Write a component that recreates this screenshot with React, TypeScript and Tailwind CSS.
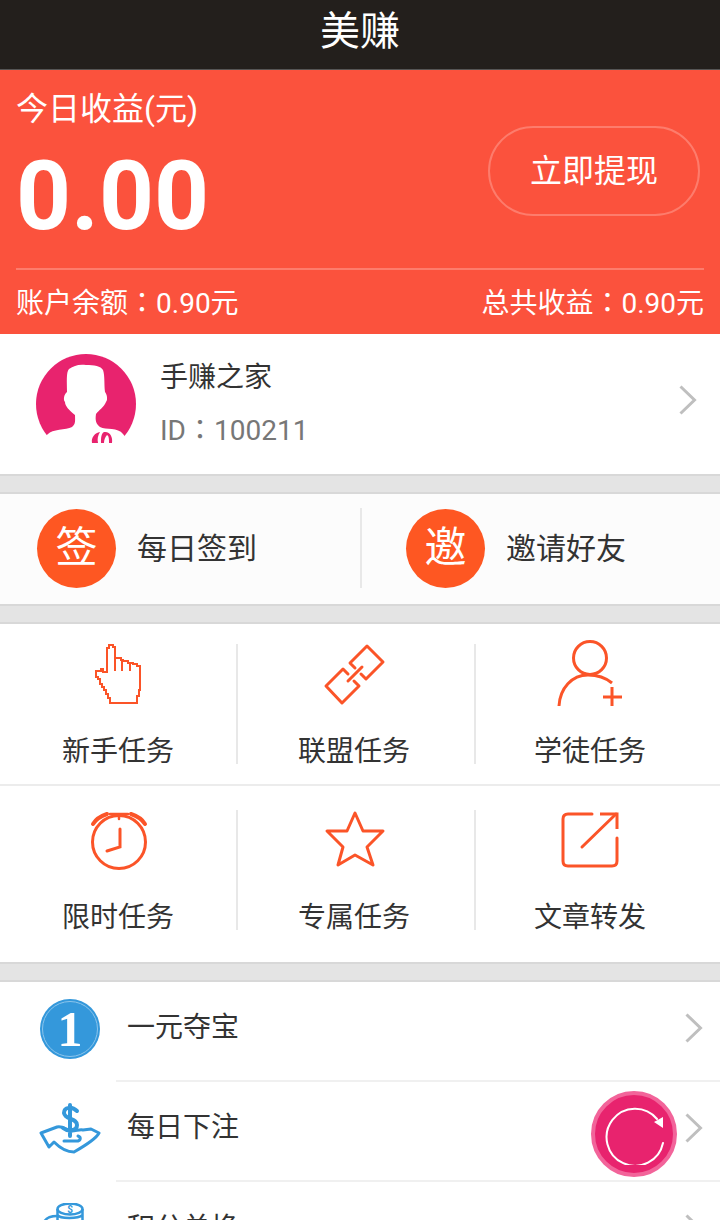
const CJK = "font-['Roboto','Noto_Sans_CJK_SC',sans-serif]"

const orange = '#fb5428'

// the fullwidth colon sits in the middle of its box only in the TC cut
const Colon = () => <span className="font-['Noto_Sans_CJK_TC',sans-serif]">：</span>

const HandIcon = () => (
  <svg width="60" height="70" viewBox="88 640 60 70" fill="none" stroke={orange} strokeWidth="2" shapeRendering="crispEdges">
    <path d="M107 672V648H109V645H113V647H115V658H121V660H123V661H128V663H133V664H137V666H140V690H139V696H137V703H110V698H108V694H106V690H104V687H102V684H100V679H98V677H96V671H101V669H103V672Z" />
    <path d="M115 658V671M122 660V671M130 662V671" />
  </svg>
)

const LinkIcon = () => (
  <svg width="64" height="70" viewBox="322 640 64 70" fill="none" stroke={orange} strokeWidth="3" strokeLinecap="round" strokeLinejoin="round">
    <path d="M355 668L350 663L367 646L383 662L366 679L361 674" />
    <path d="M348 674L343 669L326 686L342 703L359 686L354 681" />
    <path d="M348 681L362 667" />
  </svg>
)

const UserPlusIcon = () => (
  <svg width="70" height="70" viewBox="555 640 70 70" fill="none" stroke={orange} strokeWidth="3">
    <circle cx="590" cy="658" r="16.5" />
    <path d="M559 706C560 688 572 675 588 675C598 675 606 678 612 683" />
    <path d="M603 697H622M612 687V706" />
  </svg>
)

const ClockIcon = () => (
  <svg width="60" height="70" viewBox="88 806 60 70" fill="none" stroke={orange} strokeWidth="3" strokeLinecap="round">
    <circle cx="119" cy="842" r="26.5" />
    <path d="M120 829V847L107 851" />
    <path d="M110 814H128M119 814V819" strokeWidth="2.5" />
    <path d="M93 824C96 819 101 816 107 814M131 814C137 816 142 819 145 824" strokeWidth="4" />
  </svg>
)

const StarIcon = () => (
  <svg width="64" height="70" viewBox="322 806 64 70" fill="none" stroke={orange} strokeWidth="3" strokeLinejoin="round">
    <path d="M355 813L363 831H383L367 847L373 865L355 855L338 865L343 847L327 831H347Z" />
  </svg>
)

const ShareIcon = () => (
  <svg width="64" height="70" viewBox="558 806 64 70" fill="none" stroke={orange} strokeWidth="3" strokeLinecap="round">
    <path d="M592 814H568Q563 814 563 819V861Q563 866 568 866H612Q617 866 617 861V838" />
    <path d="M582 847L616 814" />
    <path d="M600 814H617V829" strokeLinecap="butt" />
  </svg>
)

const Avatar = () => (
  <svg width="100" height="96" viewBox="0 0 100 96" className="block">
    <circle cx="50" cy="50" r="50" fill="#e8236e" />
    <path
      d="M0 96V90L12 80C16 75 30 76 36 73C40 70 39 66 39 61C33 56 29 52 29 48C27 46 28 40 31 38C31 28 30 18 33 15C38 12 42 10 50 11C58 11 65 12 67 16C69 22 68 30 69 38C71 40 72 46 70 48C68 53 63 56 60 60C59 66 60 70 64 73C70 76 82 73 87 80L100 96Z"
      fill="#fff"
    />
    <path d="M56 89C55 83 59 79 64 78C62 81 61 85 62 89ZM65 89C65 84 65 80 68 78C74 77 77 83 76 89H73C73 85 73 82 71 81C69 83 68 86 68 89Z" fill="#e8236e" />
  </svg>
)

const HandCoinIcon = () => (
  <svg width="62" height="54" viewBox="39 1102 62 54" fill="none" stroke="#3498db" strokeWidth="3" strokeLinejoin="round" strokeLinecap="round">
    <path d="M41 1133L57 1127C62 1125 68 1131 72 1131C76 1131 80 1129 83 1130L91 1129L99 1133C97 1137 88 1144 74 1152C66 1152 58 1146 54 1142L49 1147Z" />
    <path d="M64 1141H78C81 1140 81 1137 78 1136" />
    <path d="M77 1111C72 1106 64 1107 64 1113C65 1120 77 1118 77 1125C77 1131 68 1132 63 1128M70 1105V1136" strokeWidth="4" />
  </svg>
)

const CoinsIcon = () => (
  <svg width="58" height="18" viewBox="41 1203 58 18" fill="none" stroke="#3498db" strokeWidth="2.5" className="block">
    <ellipse cx="70" cy="1209" rx="12.5" ry="5.5" />
    <path d="M57.5 1209V1222M82.5 1209V1222M57.5 1215C60 1219 78 1219 82.5 1215" />
    <path d="M44 1222C46 1218 50 1216 57 1216" />
    <text x="70" y="1212.5" fontSize="10" fontWeight="700" textAnchor="middle" fill="#3498db" stroke="none">$</text>
  </svg>
)

const Chevron = () => (
  <svg width="18" height="30" viewBox="0 0 18 30" fill="none" stroke="#bfbfbf" strokeWidth="3">
    <path d="M1.5 1.5L15.5 15L1.5 28.5" />
  </svg>
)

const GridCell = ({ icon, label, divider }: { icon: React.ReactNode; label: string; divider?: string }) => (
  <div className="relative flex flex-col items-center w-[236px]">
    <div className="h-[70px] flex items-start justify-center">{icon}</div>
    <span className="text-[28px] leading-[40px] mt-[22px] text-[#333]">{label}</span>
    {divider && <div className={`absolute top-[4px] h-[120px] w-[2px] bg-[#e8e8e8] ${divider}`} />}
  </div>
)

const ListRow = ({ icon, label, divider = true }: { icon: React.ReactNode; label: string; divider?: boolean }) => (
  <div className="flex h-[100px]">
    <div className="w-[116px] flex items-center justify-center pl-[24px] pb-[6px] shrink-0">{icon}</div>
    <div className={`flex-1 flex items-center justify-between pl-[11px] pr-[17px] pb-[6px] ${divider ? 'border-b-2 border-[#f0f0f0]' : ''}`}>
      <span className="text-[28px] text-[#333]">{label}</span>
      <Chevron />
    </div>
  </div>
)

export default function App() {
  return (
    <div className={`relative h-[1220px] w-[720px] overflow-hidden bg-[#e4e4e4] ${CJK}`}>
      <header className="h-[70px] bg-[#231f1c] border-b border-[#555] flex items-center justify-center text-white text-[40px] pb-[5px]">
        美赚
      </header>

      <section className="h-[264px] bg-[#fb523d] text-white px-4 flex flex-col">
        <div className="flex-1 flex items-start justify-between">
          <div>
            <div className="text-[32px] leading-[40px] pt-[19px]">今日收益(元)</div>
            <div className="text-[96px] leading-[96px] font-bold mt-[19px]">0.00</div>
          </div>
          <button className="mt-[56px] mr-[4px] w-[212px] h-[90px] rounded-[45px] border-2 border-[#fd7c6c] text-[32px]">
            立即提现
          </button>
        </div>
        <div className="h-[2px] bg-[#fd7c6c]" />
        <div className="h-[64px] flex items-center justify-between text-[28px]">
          <span>账户余额<Colon />0.90元</span>
          <span>总共收益<Colon />0.90元</span>
        </div>
      </section>

      <section className="h-[142px] bg-white border-b-2 border-[#d8d8d8] flex items-start pl-[36px] pr-[23px]">
        <div className="pt-[20px]">
          <Avatar />
        </div>
        <div className="ml-[24px] pt-[24px] flex-1">
          <div className="text-[28px] leading-[40px] text-[#333]">手赚之家</div>
          <div className="text-[28px] leading-[40px] mt-[10px] text-[#777]">ID<Colon />100211</div>
        </div>
        <div className="self-center mt-[-8px]">
          <Chevron />
        </div>
      </section>

      <section className="mt-[16px] h-[114px] bg-[#fcfcfc] border-y-2 border-[#d8d8d8] flex items-center pb-[2px]">
        <div className="w-[362px] h-[80px] flex items-center pl-[37px] border-r-2 border-[#e8e8e8]">
          <div className="w-[79px] h-[79px] rounded-full bg-[#fe5722] flex items-center justify-center text-white text-[42px] leading-none">签</div>
          <span className="ml-[21px] text-[30px] text-[#333]">每日签到</span>
        </div>
        <div className="flex-1 h-[80px] flex items-center pl-[44px]">
          <div className="w-[79px] h-[79px] rounded-full bg-[#fe5722] flex items-center justify-center text-white text-[42px] leading-none">邀</div>
          <span className="ml-[21px] text-[30px] text-[#333]">邀请好友</span>
        </div>
      </section>

      <section className="mt-[16px] bg-white border-y-2 border-[#d8d8d8]">
        <div className="flex h-[162px] border-b-2 border-[#ececec] pt-[16px]">
          <GridCell icon={<HandIcon />} label="新手任务" divider="right-[-2px]" />
          <GridCell icon={<LinkIcon />} label="联盟任务" divider="right-[-4px]" />
          <GridCell icon={<UserPlusIcon />} label="学徒任务" />
        </div>
        <div className="flex h-[176px] pt-[20px]">
          <GridCell icon={<ClockIcon />} label="限时任务" divider="right-[-2px]" />
          <GridCell icon={<StarIcon />} label="专属任务" divider="right-[-4px]" />
          <GridCell icon={<ShareIcon />} label="文章转发" />
        </div>
      </section>

      <section className="mt-[16px] bg-white border-t-2 border-[#d8d8d8]">
        <ListRow
          icon={
            <div className="w-[60px] h-[60px] rounded-full bg-[#3498db] flex items-center justify-center shrink-0 p-[2px]">
              <div className="w-full h-full rounded-full border border-[#8cc5ec] flex items-center justify-center text-white text-[50px] font-bold leading-none font-['Liberation_Serif',serif]">
                1
              </div>
            </div>
          }
          label="一元夺宝"
        />
        <ListRow icon={<HandCoinIcon />} label="每日下注" />
        <ListRow icon={<div className="self-start mt-[21px]"><CoinsIcon /></div>} label="积分兑换" divider={false} />
      </section>

      <button className="absolute left-[591px] top-[1091px] w-[86px] h-[86px] rounded-full bg-[#e8236e] border-[4px] border-[#f2649a] flex items-center justify-center">
        <svg width="62" height="62" viewBox="0 0 62 62" fill="none" stroke="#fff" strokeWidth="2" strokeLinecap="round">
          <path d="M60 40A28.5 28.5 0 1 1 54 16" />
          <path d="M51 19L60 14L60 25Z" fill="#fff" stroke="none" />
        </svg>
      </button>
    </div>
  )
}
